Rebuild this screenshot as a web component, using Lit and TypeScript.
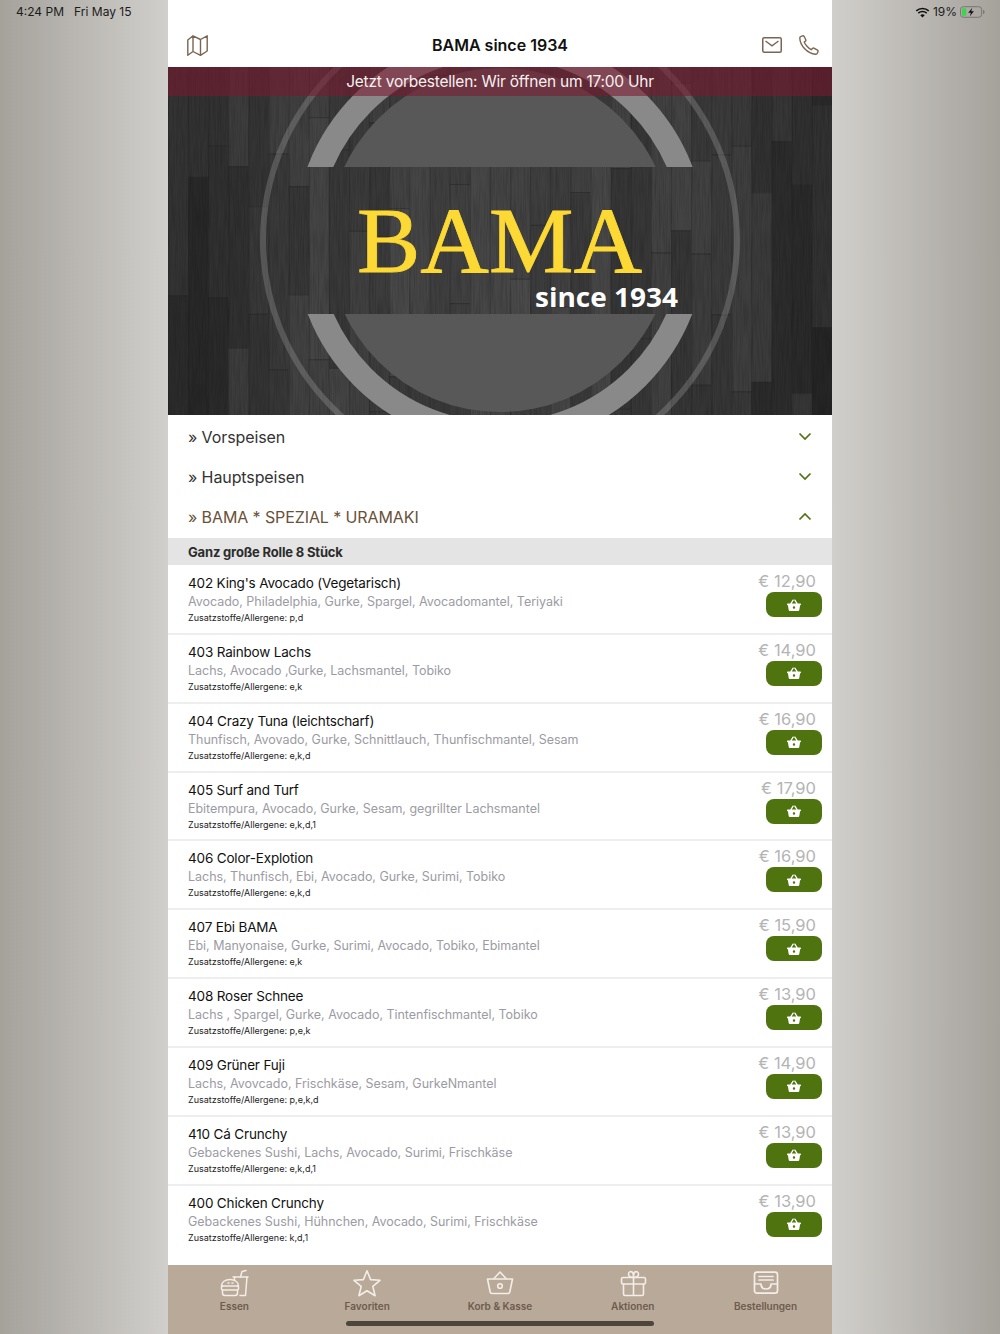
import { LitElement, html, css, svg } from "lit";
import { customElement } from "lit/decorators.js";

const items = [
  ["402 King's Avocado (Vegetarisch)", "Avocado, Philadelphia, Gurke, Spargel, Avocadomantel, Teriyaki", "p,d", "12,90"],
  ["403 Rainbow Lachs", "Lachs, Avocado ,Gurke, Lachsmantel, Tobiko", "e,k", "14,90"],
  ["404 Crazy Tuna (leichtscharf)", "Thunfisch, Avovado, Gurke, Schnittlauch, Thunfischmantel, Sesam", "e,k,d", "16,90"],
  ["405 Surf and Turf", "Ebitempura, Avocado, Gurke, Sesam, gegrillter Lachsmantel", "e,k,d,1", "17,90"],
  ["406 Color-Explotion", "Lachs, Thunfisch, Ebi, Avocado, Gurke, Surimi, Tobiko", "e,k,d", "16,90"],
  ["407 Ebi BAMA", "Ebi, Manyonaise, Gurke, Surimi, Avocado, Tobiko, Ebimantel", "e,k", "15,90"],
  ["408 Roser Schnee", "Lachs , Spargel, Gurke, Avocado, Tintenfischmantel, Tobiko", "p,e,k", "13,90"],
  ["409 Grüner Fuji", "Lachs, Avovcado, Frischkäse, Sesam, GurkeNmantel", "p,e,k,d", "14,90"],
  ["410 Cá Crunchy", "Gebackenes Sushi, Lachs, Avocado, Surimi, Frischkäse", "e,k,d,1", "13,90"],
  ["400 Chicken Crunchy", "Gebackenes Sushi, Hühnchen, Avocado, Surimi, Frischkäse", "k,d,1", "13,90"],
];

function planks() {
  let seed = 29;
  const rnd = () => ((seed = (seed * 16807) % 2147483647) / 2147483647);
  const out = [];
  const n = 33;
  const w = 664 / n;
  for (let i = 0; i < n; i++) {
    const x = i * w;
    const edge = Math.abs(i - (n - 1) / 2) / ((n - 1) / 2);
    let y = -rnd() * 120;
    while (y < 348) {
      const h = 90 + rnd() * 170;
      const g = Math.round(66 - edge * edge * 22 + (rnd() - 0.5) * 18);
      out.push(svg`<rect x=${x} y=${y} width=${w + 0.5} height=${h} fill=${`rgb(${g},${g},${g})`}></rect>`);
      out.push(svg`<rect x=${x} y=${y} width=${w} height="1" fill="#2a2a2a" opacity=".55"></rect>`);
      y += h;
    }
    out.push(svg`<rect x=${x} y="0" width="1" height="348" fill="#222" opacity=".3"></rect>`);
  }
  return out;
}

const basketSolid = html`<svg class="bk" viewBox="0 0 14 12" width="14" height="12" aria-hidden="true">
  <path fill="#fff" fill-rule="evenodd" d="M0.6 4.6H3.2L5.6 0.7C5.8 0.4 6.2 0.3 6.5 0.5C6.8 0.7 6.9 1.1 6.7 1.4L4.7 4.6H9.3L7.3 1.4C7.1 1.1 7.2 0.7 7.5 0.5C7.8 0.3 8.2 0.4 8.4 0.7L10.8 4.6H13.4C13.7 4.6 14 4.9 14 5.2V5.6C14 5.9 13.7 6.2 13.4 6.2H13.1L12.3 11C12.2 11.6 11.8 12 11.2 12H2.8C2.2 12 1.8 11.6 1.7 11L0.9 6.2H0.6C0.3 6.2 0 5.9 0 5.6V5.2C0 4.9 0.3 4.6 0.6 4.6ZM7 7.3A1.2 1.2 0 1 0 7 9.7A1.2 1.2 0 1 0 7 7.3Z"></path>
</svg>`;

const chevDown = html`<svg class="chev" viewBox="0 0 14 9" width="14" height="9" aria-hidden="true"><path d="M1.5 1.5L7 7L12.5 1.5" fill="none" stroke="#4f7310" stroke-width="1.7"></path></svg>`;
const chevUp = html`<svg class="chev" viewBox="0 0 14 9" width="14" height="9" aria-hidden="true"><path d="M1.5 7.5L7 2L12.5 7.5" fill="none" stroke="#4f7310" stroke-width="1.7"></path></svg>`;

const tabs = [
  ["Essen", svg`<g fill="none" stroke="#f3eee8" stroke-width="1.5" stroke-linejoin="round" stroke-linecap="round">
    <path d="M14 8H29"></path><path d="M28 8L26.5 26.5H21"></path><path d="M21.5 8L23 2.5L27 1.5"></path><path d="M15.5 8V10.5"></path>
    <path d="M2.5 17C2.5 13 6.2 10.5 11 10.5C15.8 10.5 19.5 13 19.5 17Z"></path><path d="M3.5 17C2 17.6 2 20.4 3.5 21H18.5C20 20.4 20 17.6 18.5 17"></path><path d="M3.5 21V24C3.5 25.6 4.6 26.5 6 26.5H16C17.4 26.5 18.5 25.6 18.5 24V21"></path><path d="M9 14H10M13 14H14"></path></g>`],
  ["Favoriten", svg`<path d="M15 1.8L18.6 10.6L28 11.3L20.8 17.4L23.1 26.7L15 21.7L6.9 26.7L9.2 17.4L2 11.3L11.4 10.6Z" fill="none" stroke="#f3eee8" stroke-width="1.6" stroke-linejoin="round"></path>`],
  ["Korb & Kasse", svg`<g fill="none" stroke="#f3eee8" stroke-width="1.6" stroke-linejoin="round"><path d="M2.5 10H27.5L24.8 23C24.6 24 24 24.5 23 24.5H7C6 24.5 5.4 24 5.2 23Z"></path><path d="M8.5 10L15 3L21.5 10"></path><circle cx="15" cy="17" r="2.3"></circle></g>`],
  ["Aktionen", svg`<g fill="none" stroke="#f3eee8" stroke-width="1.6" stroke-linejoin="round"><rect x="3.5" y="8.5" width="24" height="6.5" rx="1.5"></rect><path d="M5.5 15V25C5.5 26 6.1 26.5 7 26.5H24C24.9 26.5 25.5 26 25.5 25V15"></path><path d="M15.5 8.5V26.5"></path><path d="M15.5 8.5C12.5 8.5 10.5 7.5 10.5 5C10.5 3 12.5 2 14 3C15 3.7 15.5 6 15.5 8.5C15.5 6 16 3.7 17 3C18.5 2 20.5 3 20.5 5C20.5 7.5 18.5 8.5 15.5 8.5Z"></path></g>`],
  ["Bestellungen", svg`<g fill="none" stroke="#f3eee8" stroke-width="1.7" stroke-linejoin="round" stroke-linecap="round"><path d="M6 3.2H24C25.5 3.2 26.5 4.2 26.5 5.7V21.5C26.5 23.2 25.5 24.2 24 24.2H6C4.5 24.2 3.5 23.2 3.5 21.5V5.7C3.5 4.2 4.5 3.2 6 3.2Z"></path><path d="M3.5 15H10C10 18.5 12 20 15 20C18 20 20 18.5 20 15H26.5"></path><path d="M8 7.5H22"></path><path d="M8 11H22"></path></g>`],
] as const;

@customElement("app-root")
export class AppRoot extends LitElement {
  static styles = css`
    :host { display: flex; width: 1000px; height: 1334px; overflow: hidden; font-family: Inter, "Liberation Sans", sans-serif; background: #fff; }
    .side { width: 168px; flex: none; height: 1334px; box-sizing: border-box; padding-top: 5px; font-size: 12px; line-height: 14px; color: #1c1c1c; }
    .side.l { background: linear-gradient(90deg, #a5a29c, #d1cfcb); padding-left: 16px; white-space: pre; }
    .side.r { background: linear-gradient(90deg, #d1cfcb, #a5a29c); }
    .status { display: flex; justify-content: flex-end; align-items: center; gap: 3px; padding-right: 15px; }
    .main { width: 664px; flex: none; height: 1334px; display: flex; flex-direction: column; }
    header { height: 67px; flex: none; box-sizing: border-box; padding: 23px 13px 0; display: grid; grid-template-columns: 1fr auto 1fr; align-items: center; }
    .map { margin-left: 6px; }
    header .ttl { font-size: 16px; font-weight: 600; color: #111; line-height: 24px; letter-spacing: 0; }
    header .acts { display: flex; gap: 17px; justify-content: flex-end; align-items: center; }
    .hero { position: relative; height: 348px; flex: none; overflow: hidden; background: #333; }
    .hero > svg { display: block; }
    .notice { position: absolute; left: 0; right: 0; top: 0; height: 29px; background: rgba(122, 24, 46, .58); color: #f6f1f1; text-align: center; font-size: 15.5px; line-height: 29px; letter-spacing: -.23px; }
    .acc { padding-top: 2px; flex: none; }
    .row { height: 40px; display: flex; align-items: center; justify-content: space-between; padding: 0 20px; font-size: 16px; color: #333; letter-spacing: -.1px; }
    .row.open { color: #6a5138; }
    .chev { margin-top: -1px; }
    .sec { flex: none; margin-top: 1px; height: 27px; box-sizing: border-box; background: #e4e4e4; padding-left: 20px; font-size: 13px; line-height: 29px; font-weight: 700; color: #2c2c2c; letter-spacing: -.17px; }
    .list { flex: 1; min-height: 0; overflow: hidden; padding-top: 1px; }
    .item { height: 68.85px; box-sizing: border-box; border-bottom: 2px solid #eeeeee; display: flex; justify-content: space-between; padding: 0 10px 0 20px; }
    .item:last-child { border-bottom: 0; }
    .name { font-size: 13.5px; line-height: 19px; color: #111; margin-top: 8px; letter-spacing: -.17px; }
    .desc { font-size: 12.5px; line-height: 18px; color: #9b9ba3; letter-spacing: -.03px; }
    .al { font-size: 9px; line-height: 14px; color: #222; }
    .buy { width: 56px; display: flex; flex-direction: column; align-items: flex-end; }
    .price { font-size: 16.5px; line-height: 20px; margin: 5px 6px 1px 0; color: #b4b4b4; white-space: nowrap; }
    .btn { width: 56px; height: 25px; border-radius: 8px; background: #4f730f; display: flex; align-items: center; justify-content: center; flex: none; }
    nav { height: 69px; flex: none; background: #b9a999; position: relative; display: grid; grid-template-columns: repeat(5, 1fr); }
    .tab { display: flex; flex-direction: column; align-items: center; padding-top: 4px; font-size: 10px; line-height: 12px; font-weight: 600; color: #6b5c4d; }
    .tab svg { margin-bottom: 3px; }
    .home { position: absolute; left: 178px; top: 56px; width: 308px; height: 5px; border-radius: 3px; background: #4e463c; }
  `;

  render() {
    return html`
      <div class="side l">4:24 PM   Fri May 15</div>
      <div class="main">
        <header>
          <svg class="map" viewBox="0 0 21 21" width="21" height="21" aria-hidden="true"><path d="M.8 5L6 .8L13.5 4.5L20.2 .8V16L13.5 20.3L6 16.5L.8 20.3Z M6 .8V16.5 M13.5 4.5V20.3" fill="none" stroke="#7a6552" stroke-width="1.4" stroke-linejoin="round"></path></svg>
          <div class="ttl">BAMA since 1934</div>
          <div class="acts">
            <svg viewBox="0 0 20 16" width="20" height="16" aria-hidden="true"><rect x=".75" y=".75" width="18.5" height="14.5" rx="1.5" fill="none" stroke="#7a6552" stroke-width="1.5"></rect><path d="M3.5 4L10 8.8L16.5 4" fill="none" stroke="#7a6552" stroke-width="1.4"></path></svg>
            <svg viewBox="0 0 20 20" width="20" height="20" aria-hidden="true"><path d="M1.6 1.6L3.6 .8C4.2 .6 4.7 .8 5 1.3L6.8 4.8C7 5.3 6.9 5.8 6.5 6.1L5.2 7.1C6 9.5 9.5 13.4 12.2 14.7L13.5 13.4C13.9 13 14.4 13 14.9 13.2L18.5 15.2C19 15.5 19.2 16 19 16.5L18.3 18.2C18 18.9 17.4 19.3 16.6 19.2C8.5 18.8 1 10.5 .8 2.9C.8 2.3 1.1 1.8 1.6 1.6Z" fill="none" stroke="#7a6552" stroke-width="1.4" stroke-linejoin="round"></path></svg>
          </div>
        </header>
        <div class="hero">
          <svg viewBox="0 0 664 348" width="664" height="348" role="img" aria-label="BAMA since 1934">
            <defs>
              <clipPath id="cuts"><rect x="0" y="0" width="664" height="100"></rect><rect x="0" y="247" width="664" height="101"></rect></clipPath>
              <filter id="grain" x="0" y="0" width="100%" height="100%"><feTurbulence type="fractalNoise" baseFrequency="0.7 0.03" numOctaves="2" seed="3"></feTurbulence><feColorMatrix values="0 0 0 0 0  0 0 0 0 0  0 0 0 0 0  0 0 0 1.4 -.5"></feColorMatrix></filter>
            </defs>
            ${planks()}
            <rect width="664" height="348" filter="url(#grain)" opacity=".22"></rect>
            <circle cx="332" cy="173" r="237" fill="none" stroke="#fff" stroke-opacity=".17" stroke-width="6"></circle>
            <g clip-path="url(#cuts)">
              <circle cx="332" cy="173" r="194" fill="none" stroke="#8a8989" stroke-width="24"></circle>
              <circle cx="332" cy="173" r="172" fill="#585858"></circle>
            </g>
            <text x="189" y="205" font-family="'Liberation Serif', serif" font-size="93" fill="#fcd935" stroke="#fcd935" stroke-width=".8" textLength="285" lengthAdjust="spacingAndGlyphs">BAMA</text>
            <text x="367" y="240" font-family="'Open Sans', sans-serif" font-weight="700" font-size="27" fill="#fff" textLength="143" lengthAdjust="spacingAndGlyphs">since 1934</text>
          </svg>
          <div class="notice">Jetzt vorbestellen: Wir öffnen um 17:00 Uhr</div>
        </div>
        <div class="acc">
          <div class="row"><span>» Vorspeisen</span>${chevDown}</div>
          <div class="row"><span>» Hauptspeisen</span>${chevDown}</div>
          <div class="row open"><span>» BAMA * SPEZIAL * URAMAKI</span>${chevUp}</div>
        </div>
        <div class="sec">Ganz große Rolle 8 Stück</div>
        <div class="list">
          ${items.map(([n, d, a, p]) => html`
            <div class="item">
              <div>
                <div class="name">${n}</div>
                <div class="desc">${d}</div>
                <div class="al">Zusatzstoffe/Allergene: ${a}</div>
              </div>
              <div class="buy">
                <div class="price">€ ${p}</div>
                <div class="btn">${basketSolid}</div>
              </div>
            </div>`)}
        </div>
        <nav>
          ${tabs.map(([label, icon]) => html`<div class="tab"><svg viewBox="0 0 30 28" width="30" height="28" aria-hidden="true">${icon}</svg><span>${label}</span></div>`)}
          <div class="home"></div>
        </nav>
      </div>
      <div class="side r">
        <div class="status">
          <svg viewBox="0 0 16 12" width="15" height="11" aria-hidden="true"><path d="M8 11.5L5.6 9C7 7.7 9 7.7 10.4 9Z" fill="#111"></path><path d="M1.2 4.2C5 .8 11 .8 14.8 4.2M3.4 6.6C6 4.3 10 4.3 12.6 6.6" fill="none" stroke="#111" stroke-width="1.7"></path></svg>
          <span>19%</span>
          <svg viewBox="0 0 26 12" width="25" height="12" aria-hidden="true"><rect x=".5" y=".5" width="22" height="11" rx="3" fill="none" stroke="#77746e"></rect><rect x="2" y="2" width="4.5" height="8" rx="1" fill="#3bd34f"></rect><path d="M24 4V8C25 7.7 25.5 7 25.5 6C25.5 5 25 4.3 24 4Z" fill="#77746e"></path><path d="M12.8 1.5L8.5 6.8H11.3L10.2 10.5L14.5 5.2H11.7Z" fill="#111"></path></svg>
        </div>
      </div>
    `;
  }
}
